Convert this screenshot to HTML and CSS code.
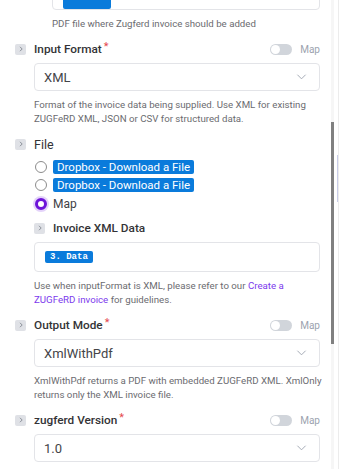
FILE: index.html
```html
<!DOCTYPE html>
<html lang="en">
<head>
    <meta charset="UTF-8">
    <meta name="viewport" content="width=device-width, initial-scale=1.0">
    <title>Add ZUGFeRD invoice</title>
    <link rel="stylesheet" href="styles.css">
</head>
<body>
    <div class="frame">
        <div class="panel">
            <!-- tail of the PDF file field, scrolled past -->
            <div class="field first">
                <div class="input-box cut">
                    <span class="pill pill-cut"></span>
                </div>
                <p class="hint">PDF file where Zugferd invoice should be added</p>
            </div>

            <div class="field">
                <div class="field-head">
                    <span class="chev"><svg viewBox="0 0 10 10"><path d="M4 2.8l2.2 2.2-2.2 2.2"/></svg></span>
                    <span class="label">Input Format</span><span class="req">*</span>
                    <span class="map-toggle"><span class="switch"></span>Map</span>
                </div>
                <div class="field-body">
                    <div class="select">
                        <span>XML</span>
                        <svg class="caret" viewBox="0 0 12 8"><path d="M1.5 1.5l4.5 4.5 4.5-4.5"/></svg>
                    </div>
                    <p class="hint">Format of the invoice data being supplied. Use XML for existing ZUGFeRD XML, JSON or CSV for structured data.</p>
                </div>
            </div>

            <div class="field">
                <div class="field-head">
                    <span class="chev"><svg viewBox="0 0 10 10"><path d="M4 2.8l2.2 2.2-2.2 2.2"/></svg></span>
                    <span class="label plain">File</span>
                </div>
                <div class="field-body">
                    <div class="radios">
                        <div class="radio-row"><span class="radio"></span><span class="pill">Dropbox - Download a File</span></div>
                        <div class="radio-row"><span class="radio"></span><span class="pill">Dropbox - Download a File</span></div>
                        <div class="radio-row checked"><span class="radio"></span><span class="radio-text">Map</span></div>
                    </div>

                    <div class="field nested">
                        <div class="field-head">
                            <span class="chev"><svg viewBox="0 0 10 10"><path d="M4 2.8l2.2 2.2-2.2 2.2"/></svg></span>
                            <span class="label">Invoice XML Data</span>
                        </div>
                        <div class="field-body">
                            <div class="input-box">
                                <span class="pill mono">3. Data</span>
                            </div>
                            <p class="hint">Use when inputFormat is XML, please refer to our <a href="#">Create a</a> <a href="#">ZUGFeRD invoice</a> for guidelines.</p>
                        </div>
                    </div>
                </div>
            </div>

            <div class="field">
                <div class="field-head">
                    <span class="chev"><svg viewBox="0 0 10 10"><path d="M4 2.8l2.2 2.2-2.2 2.2"/></svg></span>
                    <span class="label">Output Mode</span><span class="req">*</span>
                    <span class="map-toggle"><span class="switch"></span>Map</span>
                </div>
                <div class="field-body">
                    <div class="select">
                        <span>XmlWithPdf</span>
                        <svg class="caret" viewBox="0 0 12 8"><path d="M1.5 1.5l4.5 4.5 4.5-4.5"/></svg>
                    </div>
                    <p class="hint wide">XmlWithPdf returns a PDF with embedded ZUGFeRD XML. XmlOnly returns only the XML invoice file.</p>
                </div>
            </div>

            <div class="field">
                <div class="field-head">
                    <span class="chev"><svg viewBox="0 0 10 10"><path d="M4 2.8l2.2 2.2-2.2 2.2"/></svg></span>
                    <span class="label">zugferd Version</span><span class="req">*</span>
                    <span class="map-toggle"><span class="switch"></span>Map</span>
                </div>
                <div class="field-body">
                    <div class="select">
                        <span>1.0</span>
                        <svg class="caret" viewBox="0 0 12 8"><path d="M1.5 1.5l4.5 4.5 4.5-4.5"/></svg>
                    </div>
                </div>
            </div>
        </div>

        <div class="scrollbar">
            <div class="thumb"></div>
        </div>
        <div class="edge">
            <div class="edge-mark"></div>
        </div>
    </div>
</body>
</html>
```

FILE: styles.css
```css
body {
    margin: 0;
    padding: 0;
    background-color: #ffffff;
    color: #3f3f46;
    font-family: Roboto, "Noto Sans", sans-serif;
    overflow: hidden;
}

.frame {
    display: flex;
    height: 469px;
    overflow: hidden;
}

.panel {
    width: 305px;
    padding-left: 15px;
    padding-right: 11px;
    flex-shrink: 0;
}

.field {
    margin-top: 9px;
}

.field.first {
    margin-top: -20px;
    padding-left: 37px;
}

.field-head {
    display: flex;
    align-items: center;
    height: 18px;
}

.field-body {
    padding-left: 19px;
    margin-top: 5px;
}

.chev {
    width: 11px;
    height: 11px;
    border-radius: 2px;
    background-color: #dfe1e6;
    display: flex;
    align-items: center;
    justify-content: center;
    margin-right: 8px;
    flex-shrink: 0;
}

.chev svg {
    width: 10px;
    height: 10px;
    fill: none;
    stroke: #8b9099;
    stroke-width: 1;
}

.label {
    font-size: 11.8px;
    font-weight: 500;
    color: #333336;
}

.label.plain {
    font-size: 12.5px;
    font-weight: 400;
}

.req {
    color: #e5484d;
    font-size: 11px;
    margin-left: 2px;
    align-self: flex-start;
    line-height: 14px;
}

.map-toggle {
    margin-left: auto;
    display: flex;
    align-items: center;
    gap: 8px;
    font-size: 10px;
    color: #9ca3af;
}

.switch {
    width: 22px;
    height: 11px;
    border-radius: 6px;
    background-color: #d1d5db;
    position: relative;
}

.switch::after {
    content: "";
    position: absolute;
    left: 1px;
    top: 1px;
    width: 9px;
    height: 9px;
    border-radius: 50%;
    background-color: #ffffff;
}

.select,
.input-box {
    box-sizing: border-box;
    height: 28px;
    border: 1px solid #e3e4e8;
    border-radius: 4px;
    display: flex;
    align-items: center;
    padding: 0 9px;
    font-size: 13px;
    color: #444448;
}

.select .caret {
    margin-left: auto;
    width: 11px;
    height: 8px;
    fill: none;
    stroke: #9ca3af;
    stroke-width: 1;
    margin-right: 3px;
}

.input-box {
    height: 30px;
    padding: 0 10px;
}

.input-box.cut {
    align-items: flex-start;
    padding-top: 16px;
}

.hint {
    margin: 7px 0 0;
    font-size: 9.7px;
    line-height: 14px;
    color: #6b6b70;
}

.hint.wide {
    margin-right: -4px;
}

.hint a {
    color: #7c3aed;
    text-decoration: none;
}

.pill {
    background-color: #0a7bdb;
    color: #ffffff;
    font-size: 11.5px;
    line-height: 14px;
    padding: 0 4px;
    border-radius: 2px;
    white-space: nowrap;
}

.pill-cut {
    width: 40px;
    height: 12px;
}

.pill.mono {
    font-family: "Liberation Mono", "DejaVu Sans Mono", monospace;
    font-size: 9px;
    font-weight: bold;
    line-height: 12px;
    padding: 0 5px;
}

.radios {
    margin-top: 4px;
}

.radio-row {
    display: flex;
    align-items: center;
    height: 18px;
    gap: 6px;
    margin-left: 1px;
}

.radio {
    box-sizing: border-box;
    width: 12px;
    height: 12px;
    border-radius: 50%;
    border: 1px solid #8c8c8c;
    background-color: #ffffff;
    flex-shrink: 0;
}

.radio-row.checked {
    height: 20px;
}

.radio-row.checked .radio {
    border: 3.5px solid #6d14d9;
    box-shadow: 0 0 0 2px #e4d3fa;
}

.radio-text {
    font-size: 12px;
    color: #3f3f46;
}

.field.nested {
    margin-top: 5px;
}

.field.nested .field-body {
    padding-left: 0;
}

.scrollbar {
    width: 3px;
    background-color: #f6f6f6;
    flex-shrink: 0;
}

.thumb {
    margin-top: 122px;
    height: 222px;
    background-color: #808080;
}

.edge {
    flex-shrink: 0;
    border-right: 1px solid #ececec;
    box-sizing: border-box;
    width: 5px;
}

.edge-mark {
    margin-top: 155px;
    height: 47px;
    margin-left: 3px;
    border-right: 1px solid #c9cde8;
}
```
